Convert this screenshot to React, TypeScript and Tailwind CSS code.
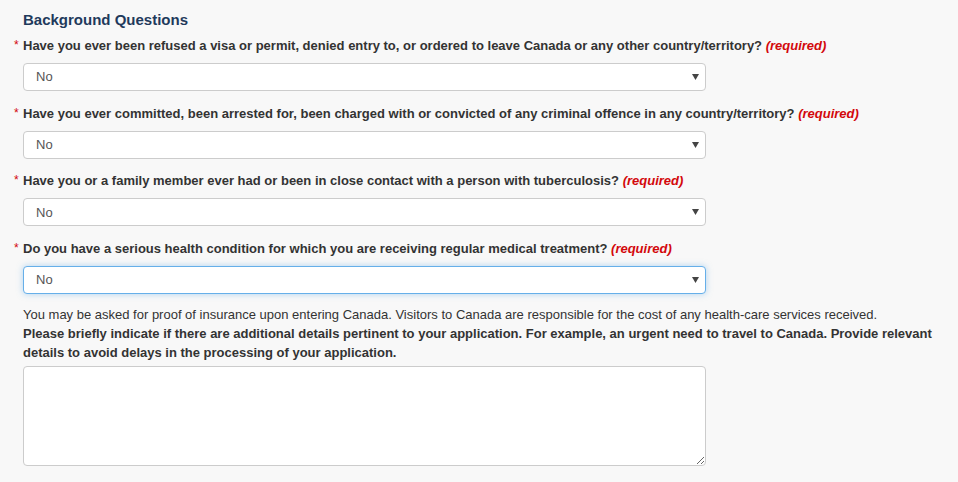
import React from 'react';

const questions = [
  'Have you ever been refused a visa or permit, denied entry to, or ordered to leave Canada or any other country/territory?',
  'Have you ever committed, been arrested for, been charged with or convicted of any criminal offence in any country/territory?',
  'Have you or a family member ever had or been in close contact with a person with tuberculosis?',
  'Do you have a serious health condition for which you are receiving regular medical treatment?',
];

const Arrow = () => (
  <svg className="absolute right-[7px] top-[11px] pointer-events-none" width="7" height="6" viewBox="0 0 7 6">
    <path d="M0 0 L7 0 L3.5 6 Z" fill="#444" />
  </svg>
);

const App = () => {
  return (
    <div
      className="w-full h-[482px] bg-[#f8f8f8] pl-[23px] pr-[20px] pt-[10px] text-[#333] overflow-hidden"
      style={{ fontFamily: '"Liberation Sans", Arial, sans-serif' }}
    >
      <h2 className="text-[15px] leading-[20px] font-bold text-[#1f3a5c] mb-[7px]">Background Questions</h2>

      {questions.map((q, i) => (
        <div key={i} className="mb-[13.67px]">
          <label className="block text-[13px] leading-[18px] font-bold">
            <span className="inline-block w-[9px] -ml-[9px] text-[#d3080c] font-normal text-[12px] align-top leading-[17px]">*</span>
            {q}{' '}
            <em className="text-[#d3080c]">(required)</em>
          </label>
          <div className="relative w-[683px] mt-[8px]">
            <select
              defaultValue="No"
              className={`block w-full h-[28px] appearance-none bg-white rounded-[4px] border pl-[12px] text-[13px] text-[#555] outline-none ${
                i === 3 ? 'border-[#66afe9] shadow-[0_0_6px_rgba(102,175,233,0.5)]' : 'border-[#ccc]'
              }`}
              style={{ fontFamily: '"Liberation Sans", Arial, sans-serif' }}
            >
              <option>No</option>
              <option>Yes</option>
            </select>
            <Arrow />
          </div>
        </div>
      ))}

      <p className="text-[13px] leading-[19px] -mt-[3px]">
        You may be asked for proof of insurance upon entering Canada. Visitors to Canada are responsible for the cost of any health-care services received.
      </p>
      <p className="text-[13px] leading-[19px] font-bold w-[920px]">
        Please briefly indicate if there are additional details pertinent to your application. For example, an urgent need to travel to Canada. Provide relevant details to avoid delays in the processing of your application.
      </p>
      <textarea
        className="block w-[683px] h-[100px] mt-[4px] bg-white border border-[#ccc] rounded-[4px] outline-none"
      />
    </div>
  );
};

export default App;
